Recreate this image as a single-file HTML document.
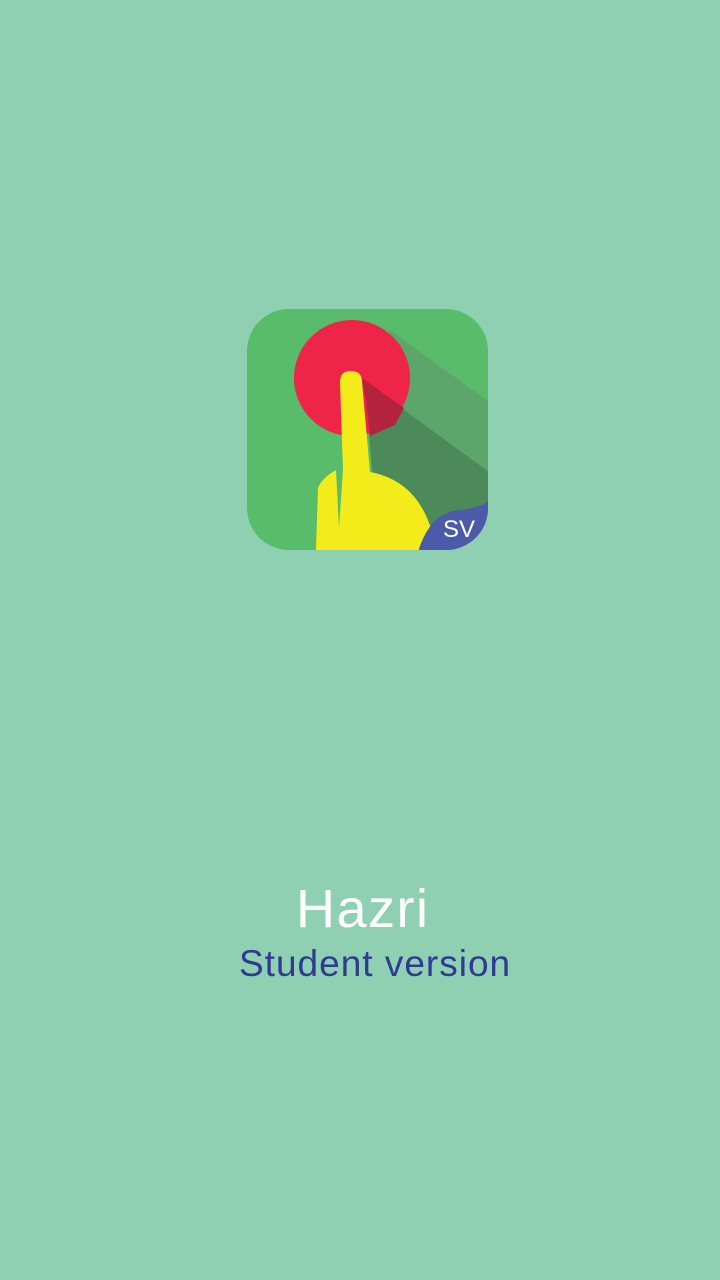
<!DOCTYPE html>
<html><head><style>
html,body{margin:0;padding:0;width:720px;height:1280px;background:#90d0b2;overflow:hidden;font-family:"Liberation Sans",sans-serif}
svg{position:absolute;left:0;top:0}
.t1{position:absolute;left:296px;top:882px;font-size:54px;color:#fff;line-height:1;letter-spacing:1.5px}
.t2{position:absolute;left:239px;top:945px;font-size:37px;color:#2f3a93;line-height:1;letter-spacing:1px}
</style></head><body>
<svg width="720" height="1280">
<defs><clipPath id="c"><rect x="247" y="309" width="241" height="241" rx="42"/></clipPath></defs>
<g clip-path="url(#c)">
<rect x="247" y="309" width="241" height="241" fill="#58bc6b"/>
<polygon points="390,330 500,410 500,480 410,420 352,436" fill="#5ca66c"/>
<polygon points="360,378 500,480 500,560 400,560 372,470 366,400" fill="#4c8a5a"/>
<circle cx="352" cy="378" r="58" fill="#ee2449"/>
<polygon points="362,378 404,408 395,425 370,436 366,400" fill="#b4233e"/>
<path d="M340,382 Q340,371 351,371 Q362,371 362,382 L370,472 Q425,482 436,550 L316,550 L318,488 Q322,478 336,470 L339,528 L343,470 Z" fill="#f3ec1a"/>
<path d="M418,552 Q430,512 460,510 Q480,508 490,500 L490,560 Z" fill="#4b5aa9"/>
</g>
<text x="443" y="537" font-family="Liberation Sans" font-size="24" fill="#fff">SV</text>
</svg>
<div class="t1">Hazri</div>
<div class="t2">Student version</div>
</body></html>
